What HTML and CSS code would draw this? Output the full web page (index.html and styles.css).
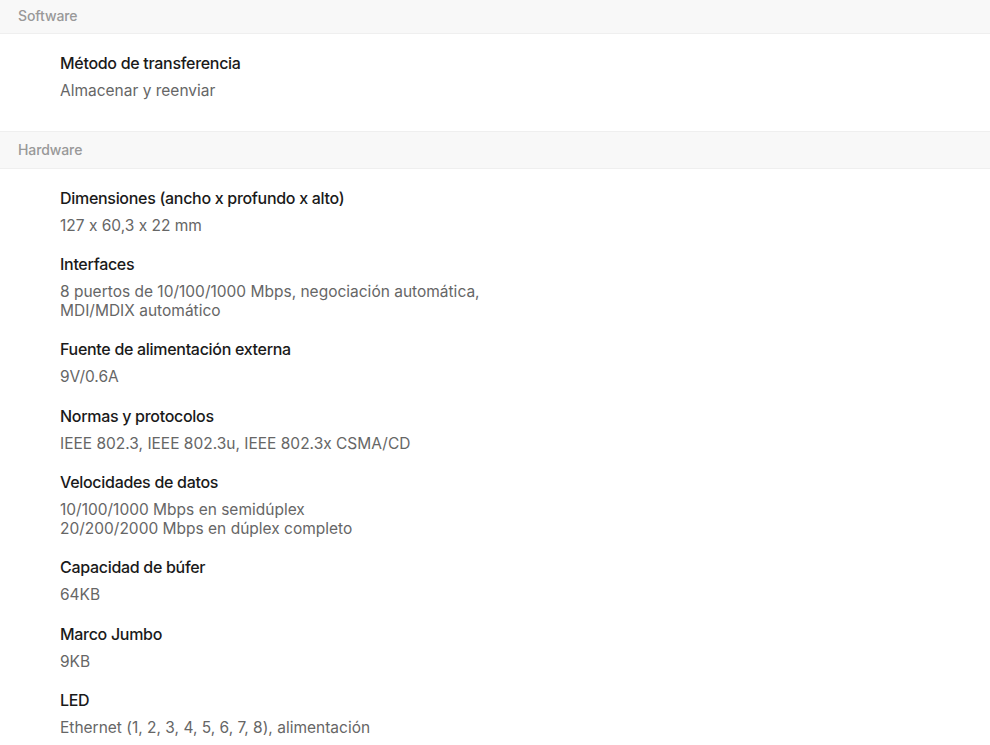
FILE: index.html
```html
<!DOCTYPE html>
<html lang="es">

<head>
  <meta charset="UTF-8" />
  <meta name="viewport" content="width=device-width, initial-scale=1" />
  <title>Especificaciones</title>
  <link rel="stylesheet" href="styles.css">
</head>

<body>

  <div class="specs">
    <!-- Software -->
    <div class="group-title">Software</div>
    <div class="group">
      <div class="item">
        <div class="name">Método de transferencia</div>
        <div class="value">Almacenar y reenviar</div>
      </div>
    </div>

    <!-- Hardware -->
    <div class="group-title">Hardware</div>
    <div class="group">
      <div class="item">
        <div class="name">Dimensiones (ancho x profundo x alto)</div>
        <div class="value">127 x 60,3 x 22 mm</div>
      </div>
      <div class="item">
        <div class="name">Interfaces</div>
        <div class="value">8 puertos de 10/100/1000 Mbps, negociación automática,<br>MDI/MDIX automático</div>
      </div>
      <div class="item">
        <div class="name">Fuente de alimentación externa</div>
        <div class="value">9V/0.6A</div>
      </div>
      <div class="item">
        <div class="name">Normas y protocolos</div>
        <div class="value">IEEE 802.3, IEEE 802.3u, IEEE 802.3x CSMA/CD</div>
      </div>
      <div class="item">
        <div class="name">Velocidades de datos</div>
        <div class="value">10/100/1000 Mbps en semidúplex<br>20/200/2000 Mbps en dúplex completo</div>
      </div>
      <div class="item">
        <div class="name">Capacidad de búfer</div>
        <div class="value">64KB</div>
      </div>
      <div class="item">
        <div class="name">Marco Jumbo</div>
        <div class="value">9KB</div>
      </div>
      <div class="item">
        <div class="name">LED</div>
        <div class="value">Ethernet (1, 2, 3, 4, 5, 6, 7, 8), alimentación</div>
      </div>
    </div>
  </div>

</body>

</html>
```

FILE: styles.css
```css
* {
  margin: 0;
  padding: 0;
  box-sizing: border-box;
}

body,
html {
  font-family: Inter, 'Noto Sans', sans-serif;
  font-feature-settings: "calt" 0; /* evita trocar x por × */
  background-color: #fff;
  color: #1a1a1a;
}

.specs {
  margin-top: -4px; /* lista ja rolada um pouco */
}

.group-title {
  height: 38px;
  padding: 0 18px;
  display: flex;
  align-items: center;
  background-color: #f8f8f8;
  border-top: 1px solid #efefef;
  border-bottom: 1px solid #efefef;
  color: #999;
  font-size: 14px;
  font-weight: 500;
  letter-spacing: -0.1px;
}

.group {
  padding: 19px 60px 11px;
}

.item {
  margin-bottom: 19px;
}

.name {
  font-size: 16px;
  line-height: 20px;
  font-weight: 500;
  letter-spacing: -0.3px;
  color: #1a1a1a;
  margin-bottom: 9px;
}

.value {
  font-size: 15.5px;
  line-height: 18.5px;
  color: #666;
}
```
